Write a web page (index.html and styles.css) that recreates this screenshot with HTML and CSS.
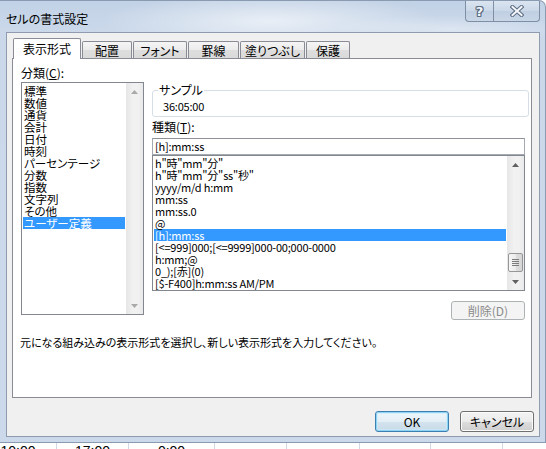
FILE: index.html
```html
<!DOCTYPE html>
<html lang="ja">
<head>
<meta charset="utf-8">
<title>セルの書式設定</title>
<link rel="stylesheet" href="styles.css">
</head>
<body>
<div class="window">
  <div class="titlebar">
    <span class="title">セルの書式設定</span>
    <div class="caption-btns">
      <div class="cap-btn help"><span class="help-glyph">?</span></div>
      <div class="cap-btn close">
        <svg width="14" height="12" viewBox="0 0 14 12">
          <path d="M2.5 2 L11.5 10 M11.5 2 L2.5 10" stroke="#5b6b80" stroke-width="4" stroke-linecap="square"/>
          <path d="M2.5 2 L11.5 10 M11.5 2 L2.5 10" stroke="#f3f6fa" stroke-width="2" stroke-linecap="square"/>
        </svg>
      </div>
    </div>
  </div>
  <div class="client">
    <div class="tabs">
      <div class="tab active">表示形式</div>
      <div class="tab w-haichi">配置</div>
      <div class="tab w-font">フォント</div>
      <div class="tab w-keisen">罫線</div>
      <div class="tab w-nuri">塗りつぶし</div>
      <div class="tab w-hogo">保護</div>
    </div>
    <div class="panel">
      <div class="columns">
        <div class="col-left">
          <div class="label">分類(<u>C</u>):</div>
          <div class="listbox cat">
            <ul class="items">
              <li>標準</li>
              <li>数値</li>
              <li>通貨</li>
              <li>会計</li>
              <li>日付</li>
              <li>時刻</li>
              <li>パーセンテージ</li>
              <li>分数</li>
              <li>指数</li>
              <li>文字列</li>
              <li>その他</li>
              <li class="sel">ユーザー定義</li>
            </ul>
            <div class="vscroll disabled">
              <div class="arrow"><svg width="7" height="4" viewBox="0 0 7 4"><path d="M0 4 L3.5 0 L7 4Z"/></svg></div>
              <div class="track"></div>
              <div class="arrow"><svg width="7" height="4" viewBox="0 0 7 4"><path d="M0 0 L3.5 4 L7 0Z"/></svg></div>
            </div>
          </div>
        </div>
        <div class="col-right">
          <div class="group">
            <span class="legend">サンプル</span>
            <div class="sample">36:05:00</div>
          </div>
          <div class="label type-label">種類(<u>T</u>):</div>
          <div class="textbox">[h]:mm:ss</div>
          <div class="listbox fmt">
            <ul class="items">
              <li>h"時"mm"分"</li>
              <li>h"時"mm"分"ss"秒"</li>
              <li>yyyy/m/d h:mm</li>
              <li>mm:ss</li>
              <li>mm:ss.0</li>
              <li>@</li>
              <li class="sel">[h]:mm:ss</li>
              <li>[&lt;=999]000;[&lt;=9999]000-00;000-0000</li>
              <li>h:mm;@</li>
              <li>0_);[赤](0)</li>
              <li>[$-F400]h:mm:ss AM/PM</li>
            </ul>
            <div class="vscroll">
              <div class="arrow"><svg width="7" height="4" viewBox="0 0 7 4"><path d="M0 4 L3.5 0 L7 4Z"/></svg></div>
              <div class="track">
                <div class="thumb">
                  <svg width="7" height="7" viewBox="0 0 7 7">
                    <path d="M0 0.5 H7 M0 2.5 H7 M0 4.5 H7 M0 6.5 H7" stroke="#7d7d7d" stroke-width="1"/>
                  </svg>
                </div>
              </div>
              <div class="arrow"><svg width="7" height="4" viewBox="0 0 7 4"><path d="M0 0 L3.5 4 L7 0Z"/></svg></div>
            </div>
          </div>
          <div class="btn-row"><div class="btn disabled-btn">削除(D)</div></div>
        </div>
      </div>
      <p class="desc">元になる組み込みの表示形式を選択し、新しい表示形式を入力してください。</p>
    </div>
    <div class="dlg-buttons">
      <div class="btn default-btn">OK</div>
      <div class="btn">キャンセル</div>
    </div>
  </div>
</div>
<div class="sheet">
  <div class="cell c1">10:00</div>
  <div class="cell c2">17:00</div>
  <div class="cell c3">0:00</div>
  <div class="cell c4"></div>
  <div class="cell c5"></div>
  <div class="cell c6"></div>
  <div class="cell c7"></div>
  <div class="cell c8"></div>
</div>
</body>
</html>
```

FILE: styles.css
```css
* { box-sizing: border-box; }

html, body {
  margin: 0;
  padding: 0;
}

body {
  width: 546px;
  height: 449px;
  overflow: hidden;
  background: #ffffff;
  font-family: "Noto Sans CJK JP", "Noto Sans", sans-serif;
  font-feature-settings: "palt";
  font-size: 12px;
  line-height: 12px;
  color: #000;
}

/* ---------- window frame ---------- */
.window {
  width: 546px;
  height: 443px;
  display: flex;
  flex-direction: column;
  padding: 0 5px 6px 6px;
  border-top: 1px solid #8a9bb1;
  border-right: 1px solid #8a9bb1;
  border-bottom: 1px solid #8a9bb1;
  border-radius: 0 7px 0 0;
  background:
    radial-gradient(ellipse 170px 28px at 270px 20px, rgba(255,255,255,0.6), rgba(255,255,255,0)),
    radial-gradient(ellipse 120px 14px at 450px 28px, rgba(255,255,255,0.35), rgba(255,255,255,0)),
    linear-gradient(180deg, #c2d2e6 0px, #cad8ea 30px, #ccd9ea 100%);
}

.titlebar {
  height: 31px;
  display: flex;
  justify-content: space-between;
  align-items: flex-start;
  flex: none;
}

.title {
  padding-top: 12px;
  font-size: 12px;
  line-height: 12px;
  color: #000;
}

.caption-btns {
  display: flex;
}

.cap-btn {
  height: 21px;
  display: flex;
  align-items: center;
  justify-content: center;
  border: 1px solid #7d8ea5;
  border-top: none;
  background: linear-gradient(180deg, rgba(240,244,250,0.55), rgba(205,217,232,0.7) 50%, rgba(190,205,224,0.75) 51%, rgba(200,214,230,0.8));
}

.cap-btn.help {
  width: 28px;
  border-radius: 0 0 0 4px;
  border-right: none;
}

.cap-btn.close {
  width: 47px;
  border-radius: 0 0 4px 0;
}

.help-glyph {
  font-family: "DejaVu Sans", sans-serif;
  font-weight: bold;
  font-size: 13px;
  line-height: 13px;
  color: #f4f7fb;
  text-shadow: 1px 0 0 #5b6b80, -1px 0 0 #5b6b80, 0 1px 0 #5b6b80, 0 -1px 0 #5b6b80,
               1px 1px 0 #5b6b80, -1px -1px 0 #5b6b80, 1px -1px 0 #5b6b80, -1px 1px 0 #5b6b80;
}

/* ---------- client area ---------- */
.client {
  flex: 1;
  background: #f0f0f0;
  border: 1px solid #8f9caf;
  padding: 5px 7px 4px 5px;
  display: flex;
  flex-direction: column;
}

.tabs {
  height: 20px;
  display: flex;
  align-items: flex-end;
  padding-left: 1px;
  flex: none;
}

.tab {
  height: 17px;
  margin-left: 1px;
  border: 1px solid #898c95;
  border-bottom: none;
  border-radius: 2px 2px 0 0;
  background: linear-gradient(180deg, #f5f5f5 0%, #ebebeb 50%, #dedede 51%, #dadada 100%);
  display: flex;
  align-items: center;
  justify-content: center;
  padding-top: 1px;
  white-space: nowrap;
}

.tab.active {
  width: 68px;
  height: 21px;
  margin-left: 0;
  margin-bottom: -1px;
  background: #ffffff;
  position: relative;
  z-index: 2;
  padding-top: 0;
}

.w-haichi { width: 50px; }
.w-font { width: 54px; }
.w-keisen { width: 51px; }
.w-nuri { width: 65px; }
.w-hogo { width: 44px; }

.panel {
  height: 340px;
  flex: none;
  background: #ffffff;
  border: 1px solid #898c95;
  padding: 8px 0 0 8px;
  position: relative;
  z-index: 1;
}

.columns {
  display: flex;
  gap: 8px;
}

.col-left {
  width: 123px;
  flex: none;
}

.col-right {
  width: 377px;
  flex: none;
  margin-top: 23px;
}

.label {
  line-height: 12px;
}

.col-left .listbox {
  margin-top: 3px;
}

u { text-decoration: underline; text-underline-offset: 1px; }

/* ---------- list boxes ---------- */
.listbox {
  border: 1px solid #828790;
  background: #fff;
  display: flex;
}

.listbox .items {
  list-style: none;
  margin: 0;
  flex: 1;
  padding: 1px;
}

.listbox li {
  height: 12px;
  font-size: 11.5px;
  line-height: 12px;
  white-space: nowrap;
  padding-left: 1px;
}

.listbox.fmt li {
  font-size: 11px;
  letter-spacing: -0.2px;
}

.listbox li.sel {
  background: #3399ff;
  color: #ffffff;
}

.listbox.cat {
  width: 123px;
  height: 233px;
}

.listbox.cat .items {
  padding-top: 2px;
}

.listbox.fmt {
  width: 373px;
  height: 136px;
}

.vscroll {
  width: 17px;
  flex: none;
  display: flex;
  flex-direction: column;
  background: linear-gradient(90deg, #e6e6e6, #f1f1f1 40%, #f1f1f1 70%, #e9e9e9);
}

.vscroll .arrow {
  height: 17px;
  display: flex;
  align-items: center;
  justify-content: center;
  flex: none;
}

.vscroll .arrow svg { fill: #606060; }
.vscroll.disabled .arrow svg { fill: #a9a9a9; }

.vscroll .track {
  flex: 1;
}

.thumb {
  margin: 80px 1px 0 1px;
  height: 19px;
  border: 1px solid #979797;
  border-radius: 2px;
  background: linear-gradient(90deg, #f6f6f6 0%, #ececec 50%, #dedede 51%, #d6d6d6 100%);
  display: flex;
  align-items: center;
  justify-content: center;
}

/* ---------- right column ---------- */
.group {
  position: relative;
  width: 377px;
  height: 27px;
  border: 1px solid #d5dfe5;
  border-radius: 3px;
  padding: 9px 0 0 10px;
}

.legend {
  position: absolute;
  left: 5px;
  top: -7px;
  background: #fff;
  padding: 0 1px;
  line-height: 12px;
}

.sample {
  font-size: 11px;
  letter-spacing: -0.2px;
  line-height: 12px;
}

.type-label {
  margin-top: 4px;
}

.textbox {
  margin-top: 5px;
  width: 373px;
  height: 17px;
  border: 1px solid #a5a9b1;
  border-top-color: #8e9298;
  padding: 1px 0 0 2px;
  font-size: 11px;
  letter-spacing: -0.2px;
  line-height: 13px;
  white-space: nowrap;
}

.btn-row {
  width: 373px;
  margin-top: 10px;
  display: flex;
  justify-content: flex-end;
}

.btn {
  height: 21px;
  width: 74px;
  border: 1px solid #707070;
  border-radius: 3px;
  background: linear-gradient(180deg, #f3f3f3 0%, #ebebeb 50%, #dddddd 51%, #cfcfcf 100%);
  box-shadow: inset 0 0 0 1px #fbfbfb;
  display: flex;
  align-items: center;
  justify-content: center;
  line-height: 12px;
  white-space: nowrap;
}

.disabled-btn {
  height: 19px;
  border-color: #adb2b5;
  background: #f4f4f4;
  box-shadow: none;
  color: #8a8a8a;
}

.desc {
  margin: 16px 0 0 -1px;
  font-size: 11px;
  line-height: 12px;
  white-space: nowrap;
}

.dlg-buttons {
  margin-top: 13px;
  display: flex;
  justify-content: flex-end;
  gap: 11px;
  padding-right: 5px;
  margin-right: -7px;
}

.default-btn {
  border-color: #3c7fb1;
  box-shadow: inset 0 0 0 1px #8fd2f4, inset 0 0 0 2px rgba(200,236,252,0.6);
  background: linear-gradient(180deg, #eef6fb 0%, #e3eef6 50%, #d3e3ee 51%, #c9dbe8 100%);
}

/* ---------- spreadsheet strip ---------- */
.sheet {
  height: 6px;
  display: flex;
  overflow: hidden;
  background: #ffffff;
  font-family: "Liberation Sans", Arial, sans-serif;
  font-feature-settings: normal;
  font-size: 14px;
  line-height: 16px;
}

.cell {
  flex: none;
  height: 16px;
  border-right: 1px solid #d0d7e5;
  text-align: center;
}

.c1 { width: 77px; margin-left: -20px; }
.c2 { width: 72px; }
.c3 { width: 86px; }
.c4 { width: 72px; }
.c5 { width: 73px; }
.c6 { width: 71px; }
.c7 { width: 72px; }
.c8 { width: 60px; border-right: none; }
```
